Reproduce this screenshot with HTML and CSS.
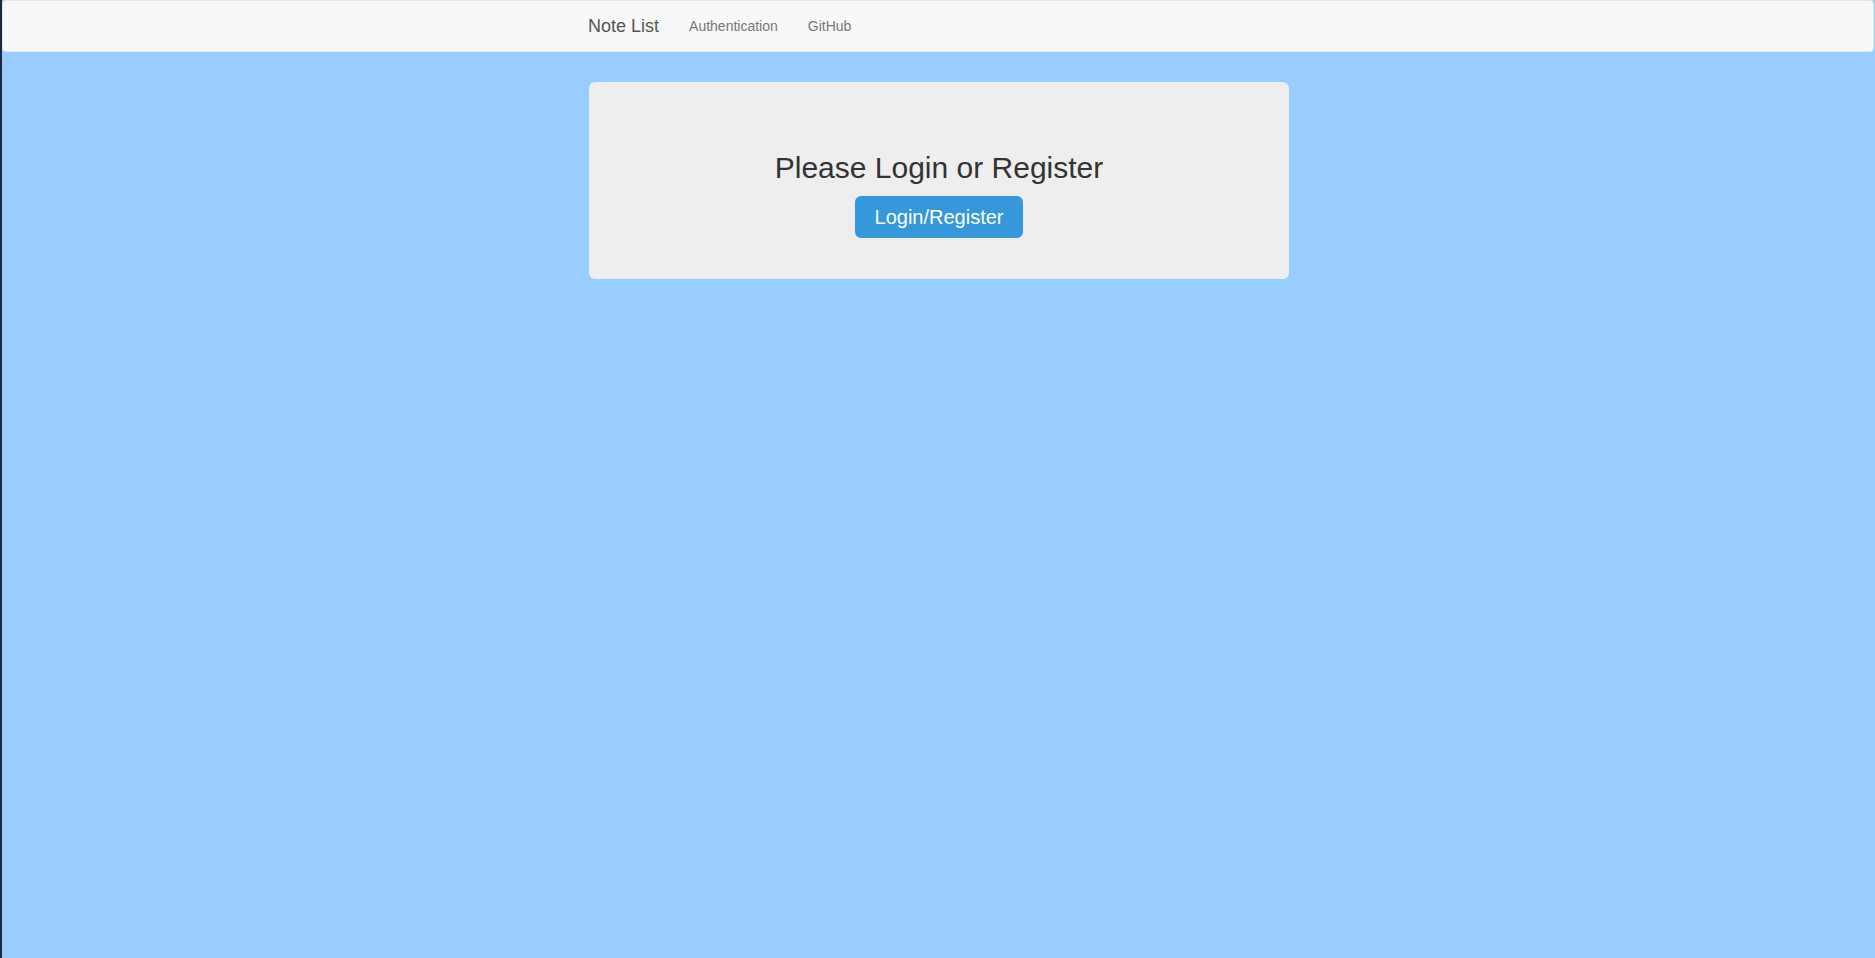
FILE: index.html
```html
<!DOCTYPE html>
<html>
<head>
<meta charset="utf-8">
<title>Note List</title>
<link rel="stylesheet" href="styles.css">
</head>
<body>
<div class="page">
  <nav class="navbar">
    <div class="container nav-inner">
      <a class="brand" href="#">Note List</a>
      <a class="nav-link" href="#">Authentication</a>
      <a class="nav-link" href="#">GitHub</a>
    </div>
  </nav>
  <main class="container">
    <section class="card">
      <h2 class="card-title">Please Login or Register</h2>
      <button class="btn" type="button">Login/Register</button>
    </section>
  </main>
</div>
</body>
</html>
```

FILE: styles.css
```css
html, body {
  margin: 0;
  padding: 0;
  height: 100%;
}
body {
  background: #99ccff;
  font-family: "Liberation Sans", Arial, sans-serif;
  color: #333;
}
.page {
  min-height: 100vh;
  border-left: 2px solid #1c2a40;
  box-sizing: border-box;
  padding-left: 1px;
}
.navbar {
  background: #f8f8f8;
  border: 1px solid #e7e7e7;
  border-radius: 4px;
  height: 50px;
  margin-left: -1px;
  margin-right: 1px;
}
.container {
  width: 700px;
  margin: 0 auto;
}
.nav-inner {
  display: flex;
  align-items: flex-start;
}
.brand {
  font-size: 18px;
  line-height: 20px;
  padding: 15px 15px 15px 0;
  color: #555;
  text-decoration: none;
}
.nav-link {
  font-size: 14px;
  line-height: 20px;
  padding: 15px;
  color: #777;
  text-decoration: none;
}
main.container {
  padding-top: 30px;
}
.card {
  background: #eeeeee;
  border-radius: 6px;
  height: 197px;
  box-sizing: border-box;
  padding-top: 69px;
  display: flex;
  flex-direction: column;
  align-items: center;
}
.card-title {
  margin: 0 0 12px;
  font-size: 30px;
  line-height: 33px;
  font-weight: normal;
  color: #333;
}
.btn {
  background: #3498db;
  color: #fff;
  border: none;
  border-radius: 6px;
  font-family: "Liberation Sans", Arial, sans-serif;
  font-size: 20px;
  line-height: 22px;
  padding: 10px 20px;
  cursor: pointer;
}
```
